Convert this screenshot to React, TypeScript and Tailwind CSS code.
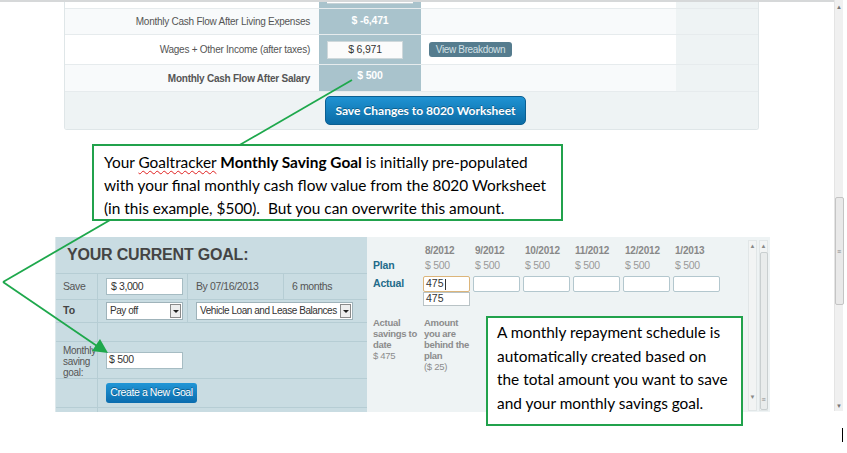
import React from 'react';

const months = ['8/2012', '9/2012', '10/2012', '11/2012', '12/2012', '1/2013'];

const SelectBox: React.FC<{ label: string; className: string }> = ({ label, className }) => (
  <div className={`flex items-center bg-white border border-[#9fb3ba] h-[18px] pl-[3px] ${className}`}>
    <span className="flex-1 text-[10px] tracking-[-0.45px] text-[#333] leading-none whitespace-nowrap">{label}</span>
    <div className="w-[11px] h-[14px] mr-[1px] bg-[#eeeeee] border border-[#8a8a8a] flex items-center justify-center">
      <div className="w-0 h-0 border-l-[3px] border-r-[3px] border-t-[3px] border-l-transparent border-r-transparent border-t-[#222]" />
    </div>
  </div>
);

const MiniScroll: React.FC<{ thumb?: boolean }> = ({ thumb }) => (
  <div className="w-[9px] h-[171px] mt-[3px] bg-[#f2f4f4] border border-[#e1e6e7] flex flex-col items-center">
    <span className="text-[6px] text-[#888] leading-none mt-[2px]">▲</span>
    {thumb ? (
      <div className="mt-[3px] w-[8px] flex-1 bg-[#e9ecec] border border-[#c9cfd0] rounded-[2px] flex items-end justify-center pb-[6px]">
        <span className="text-[7px] text-[#888] leading-none">≡</span>
      </div>
    ) : (
      <>
        <div className="flex-1" />
        <span className="text-[6px] text-[#888] leading-none mb-[10px]">▼</span>
      </>
    )}
  </div>
);

export default function App() {
  return (
    <div className="relative w-[847px] h-[453px] overflow-hidden bg-white flex font-['Liberation_Sans',Arial,sans-serif]">
      <div className="w-[834px] flex flex-col">
        <div className="h-[2px] bg-[#d6d8d9]" />

        {/* worksheet panel */}
        <div className="ml-[64px] w-[695px] border-l border-r border-b border-[#dfe6e8] rounded-b-[3px] overflow-hidden">
          <div className="flex h-[7px] border-b border-[#e6ebed]">
            <div className="w-[254px] bg-white" />
            <div className="w-[102px] bg-[#a9c3cc] px-[8px]">
              <div className="h-[2px] bg-white border-b border-[#c7d3d7]" />
            </div>
            <div className="w-[255px] bg-white" />
            <div className="w-[82px] bg-[#eef3f4]" />
          </div>
          <div className="flex h-[26px] border-b border-[#e6ebed]">
            <div className="w-[254px] bg-[#f8fafb] flex items-center justify-end pr-[9px] text-[10px] tracking-[-0.25px] text-[#555]">
              Monthly Cash Flow After Living Expenses
            </div>
            <div className="w-[102px] bg-[#a9c3cc] flex justify-center pt-[4px] text-[10.5px] tracking-[-0.2px] font-bold text-white">$ -6,471</div>
            <div className="w-[255px] bg-[#f8fafb]" />
            <div className="w-[82px] bg-[#eef3f4]" />
          </div>
          <div className="flex h-[30px] border-b border-[#e6ebed]">
            <div className="w-[254px] bg-white flex items-center justify-end pr-[9px] text-[10px] tracking-[-0.25px] text-[#555]">
              Wages + Other Income (after taxes)
            </div>
            <div className="w-[102px] bg-[#a9c3cc] flex items-center pl-[8px]">
              <div className="w-[76px] h-[18px] bg-[#fbfbfb] border border-[#cfd8db] flex items-center justify-center text-[10.5px] tracking-[-0.2px] text-[#333]">
                $ 6,971
              </div>
            </div>
            <div className="w-[255px] bg-white flex items-center pl-[8px]">
              <div className="w-[83px] h-[15px] bg-[#557c8e] rounded-[3px] flex items-center justify-center text-[10px] tracking-[-0.35px] text-[#d3e0e5]">
                View Breakdown
              </div>
            </div>
            <div className="w-[82px] bg-[#eef3f4]" />
          </div>
          <div className="flex h-[27px] border-b border-[#e6ebed]">
            <div className="w-[254px] bg-[#f8fafb] flex items-center justify-end pr-[9px] text-[10px] tracking-[-0.25px] font-bold text-[#555]">
              Monthly Cash Flow After Salary
            </div>
            <div className="w-[102px] bg-[#a9c3cc] flex justify-center pt-[3px] text-[10.5px] tracking-[-0.2px] font-bold text-white">$ 500</div>
            <div className="w-[255px] bg-[#f8fafb]" />
            <div className="w-[82px] bg-[#eef3f4]" />
          </div>
          <div className="h-[37px] bg-[#eef3f4] pl-[260px] pt-[4px]">
            <div className="w-[201px] h-[29px] rounded-[5px] border border-[#0b5f91] bg-gradient-to-b from-[#1f93d3] to-[#0a6ca6] flex items-center justify-center text-white font-bold text-[12px] font-['Lato',sans-serif] [text-shadow:0_-1px_0_rgba(0,0,0,0.3)]">
              Save Changes to 8020 Worksheet
            </div>
          </div>
        </div>

        <div className="h-[107px]" />

        {/* goal panel */}
        <div className="ml-[55px] flex h-[175px]">
          <div className="w-[312px] bg-[#c9dce2] border-l border-[#dde8eb] flex flex-col">
            <div className="h-[36px] flex items-center pl-[11px] text-[16px] tracking-[-0.2px] font-bold text-[#444]">YOUR CURRENT GOAL:</div>
            <div className="flex h-[26px] border-t border-[#b6cdd4] text-[10.5px] tracking-[-0.4px] text-[#555]">
              <div className="w-[42px] flex items-center pl-[7px] border-r border-[#b6cdd4]">Save</div>
              <div className="w-[90px] flex items-center pl-[8px] border-r border-[#b6cdd4]">
                <div className="w-[77px] h-[17px] bg-white border border-[#a6bcc3] flex items-center pl-[4px] text-[#333]">$ 3,000</div>
              </div>
              <div className="w-[96px] flex items-center pl-[8px] border-r border-[#b6cdd4]">By 07/16/2013</div>
              <div className="flex-1 flex items-center pl-[8px]">6 months</div>
            </div>
            <div className="flex h-[23px] border-t border-[#b6cdd4] text-[10.5px] text-[#444]">
              <div className="w-[42px] flex items-center pl-[7px] font-bold border-r border-[#b6cdd4]">To</div>
              <div className="w-[90px] flex items-center pl-[8px] border-r border-[#b6cdd4]">
                <SelectBox label="Pay off" className="w-[77px]" />
              </div>
              <div className="flex-1 flex items-center pl-[8px]">
                <SelectBox label="Vehicle Loan and Lease Balances" className="w-[157px]" />
              </div>
            </div>
            <div className="flex h-[19px] border-t border-[#b6cdd4]">
              <div className="w-[42px] border-r border-[#b6cdd4]" />
            </div>
            <div className="flex h-[37px] border-t border-[#b6cdd4]">
              <div className="w-[42px] pl-[7px] pt-[3px] text-[10px] tracking-[-0.3px] leading-[11px] text-[#555] border-r border-[#b6cdd4]">
                Monthly saving goal:
              </div>
              <div className="flex items-center pl-[8px]">
                <div className="w-[77px] h-[17px] bg-white border border-[#a6bcc3] flex items-center pl-[2px] text-[10.5px] tracking-[-0.3px] text-[#333]">$ 500</div>
              </div>
            </div>
            <div className="flex h-[29px] border-t border-[#b6cdd4]">
              <div className="w-[42px] border-r border-[#b6cdd4]" />
              <div className="flex items-center pl-[8px]">
                <div className="w-[91px] h-[20px] rounded-[3px] bg-gradient-to-b from-[#2196d6] to-[#0a6cae] flex items-center justify-center whitespace-nowrap text-[10.5px] tracking-[-0.4px] text-white [text-shadow:0_-1px_0_rgba(0,0,0,0.35)]">
                  Create a New Goal
                </div>
              </div>
            </div>
            <div className="flex-1 border-t border-[#b6cdd4] flex">
              <div className="w-[42px] border-r border-[#b6cdd4]" />
            </div>
          </div>

          <div className="w-[403px] bg-[#eef3f4] flex">
            <div className="w-[381px] pl-[6px] flex flex-col">
              <div className="flex mt-[7px] h-[12px] items-center">
                <div className="w-[50px]" />
                {months.map((m) => (
                  <div key={m} className="w-[50px] pl-[2px] text-[10px] tracking-[-0.2px] font-bold text-[#888]">{m}</div>
                ))}
              </div>
              <div className="flex mt-[3px] h-[13px] items-center">
                <div className="w-[50px] text-[10.5px] tracking-[-0.2px] font-bold text-[#236b8a]">Plan</div>
                {months.map((m) => (
                  <div key={m} className="w-[50px] pl-[2px] text-[10.5px] tracking-[-0.3px] text-[#9a9a9a]">$ 500</div>
                ))}
              </div>
              <div className="flex mt-[4px] h-[16px] items-center">
                <div className="w-[50px] text-[10.5px] tracking-[-0.2px] font-bold text-[#236b8a]">Actual</div>
                {months.map((m, i) => (
                  <div key={m} className="w-[50px]">
                    <div
                      className={`w-[47px] h-[16px] bg-white rounded-[2px] border flex items-center pl-[2px] text-[10.5px] text-[#333] ${
                        i === 0 ? 'border-[#dcb57a]' : 'border-[#b3c7ce]'
                      }`}
                    >
                      {i === 0 && (
                        <>
                          475<span className="w-px h-[11px] bg-[#333] ml-[1px]" />
                        </>
                      )}
                    </div>
                  </div>
                ))}
              </div>
              <div className="flex h-[14px]">
                <div className="w-[50px]" />
                <div className="w-[47px] h-[14px] bg-white border border-[#b9c3c6] flex items-center pl-[2px] text-[10.5px] text-[#333]">475</div>
              </div>
              <div className="flex mt-[11px] text-[9.5px] tracking-[-0.3px] leading-[11px] text-[#8c8c8c] whitespace-nowrap">
                <div className="w-[51px]">
                  <div className="font-bold">Actual<br />savings to<br />date</div>
                  <div>$ 475</div>
                </div>
                <div className="w-[50px]">
                  <div className="font-bold">Amount<br />you are<br />behind the<br />plan</div>
                  <div>($ 25)</div>
                </div>
              </div>
            </div>
            <MiniScroll />
            <div className="w-[2px]" />
            <MiniScroll thumb />
          </div>
        </div>
      </div>

      {/* window scrollbar */}
      <div className="w-[9px] flex flex-col">
        <div className="h-[411px] bg-[#f0f0f0] border-l border-[#e4e4e4] flex flex-col items-center">
          <span className="text-[6px] text-[#777] leading-none mt-[4px]">▲</span>
          <div className="h-[187px]" />
          <div className="w-[9px] h-[108px] bg-[#e9e9e9] border border-[#c4c4c4] rounded-[2px] flex items-center justify-center">
            <span className="text-[7px] text-[#888] leading-none">≡</span>
          </div>
          <div className="flex-1" />
          <span className="text-[6px] text-[#777] leading-none mb-[2px]">▼</span>
        </div>
        <div className="h-[17px]" />
        <div className="ml-[8px] w-px h-[14px] bg-black" />
      </div>

      {/* annotations */}
      <svg className="absolute left-0 top-0 pointer-events-none" width="847" height="453">
        <line x1="352" y1="80" x2="3" y2="282" stroke="#1ea84c" strokeWidth="1.8" />
        <line x1="3" y1="282" x2="97" y2="346" stroke="#1ea84c" strokeWidth="1.8" />
        <polygon points="108,353 92,351 100,339" fill="#1ea84c" />
      </svg>

      <div className="absolute left-[92px] top-[144px] w-[471px] h-[77px] bg-white border-2 border-[#21a24c] pl-[10px] pt-[5px] text-[15.4px] leading-[23px] text-black font-['Lato',sans-serif] whitespace-nowrap">
        Your <span className="underline decoration-wavy decoration-[#e02020] decoration-1 underline-offset-2">Goaltracker</span>{' '}
        <span className="font-bold">Monthly Saving Goal</span> is initially pre-populated
        <br />
        with your final monthly cash flow value from the 8020 Worksheet
        <br />
        (in this example, $500).&nbsp; But you can overwrite this amount.
      </div>

      <div className="absolute left-[486px] top-[316px] w-[257px] h-[110px] bg-white border-2 border-[#21a24c] pl-[9px] pt-[3px] text-[15.4px] leading-[23.7px] text-black font-['Lato',sans-serif] whitespace-nowrap">
        A monthly repayment schedule is
        <br />
        automatically created based on
        <br />
        the total amount you want to save
        <br />
        and your monthly savings goal.
      </div>
    </div>
  );
}
